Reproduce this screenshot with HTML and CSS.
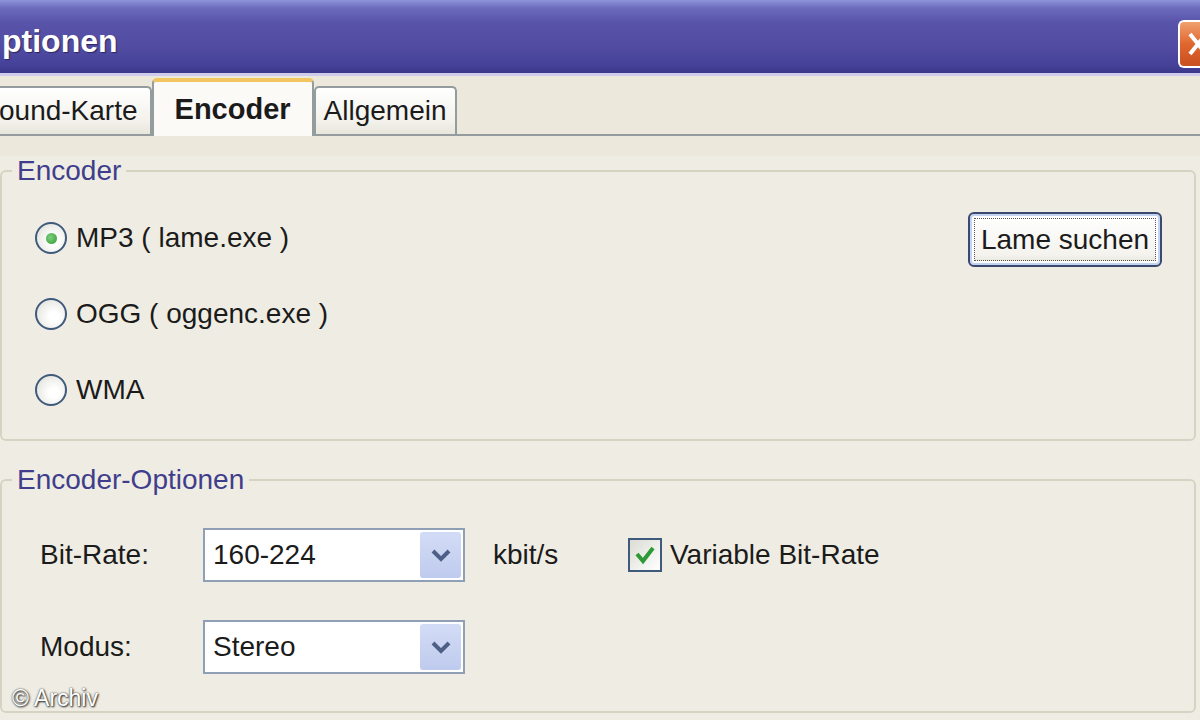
FILE: index.html
```html
<!DOCTYPE html>
<html lang="de">
<head>
    <meta charset="UTF-8">
    <title>Optionen</title>
    <link rel="stylesheet" href="styles.css">
</head>
<body>
    <div class="window">
        <div class="titlebar">
            <span class="title">ptionen</span>
            <span class="close-btn">
                <svg width="20" height="44" viewBox="0 0 20 44">
                    <path d="M10 12 L26 32 M26 12 L10 32" stroke="#fff" stroke-width="4" fill="none"/>
                </svg>
            </span>
        </div>

        <div class="tabs">
            <div class="tab tab-first">ound-Karte</div>
            <div class="tab active">Encoder</div>
            <div class="tab">Allgemein</div>
        </div>

        <div class="panel">
            <fieldset class="group group-encoder">
                <legend>Encoder</legend>
                <div class="encoder-body">
                    <div class="radios">
                        <label class="radio checked"><span class="radio-dot"></span>MP3 ( lame.exe )</label>
                        <label class="radio"><span class="radio-dot"></span>OGG ( oggenc.exe )</label>
                        <label class="radio"><span class="radio-dot"></span>WMA</label>
                    </div>
                    <button type="button" class="xp-btn">Lame suchen</button>
                </div>
            </fieldset>

            <fieldset class="group group-options">
                <legend>Encoder-Optionen</legend>
                <div class="options-body">
                    <div class="opt-row">
                        <span class="opt-label">Bit-Rate:</span>
                        <div class="combo">
                            <span class="combo-value">160-224</span>
                            <span class="combo-arrow">
                                <svg width="20" height="14" viewBox="0 0 20 14">
                                    <path d="M2 3 L10 11 L18 3" stroke="#4d5f86" stroke-width="4" fill="none"/>
                                </svg>
                            </span>
                        </div>
                        <span class="unit">kbit/s</span>
                        <label class="check">
                            <span class="check-box">
                                <svg width="24" height="22" viewBox="0 0 24 22">
                                    <path d="M4 10 L10 17 L20 4" stroke="#2f9a35" stroke-width="4" fill="none"/>
                                </svg>
                            </span>
                            Variable Bit-Rate
                        </label>
                    </div>
                    <div class="opt-row">
                        <span class="opt-label">Modus:</span>
                        <div class="combo">
                            <span class="combo-value">Stereo</span>
                            <span class="combo-arrow">
                                <svg width="20" height="14" viewBox="0 0 20 14">
                                    <path d="M2 3 L10 11 L18 3" stroke="#4d5f86" stroke-width="4" fill="none"/>
                                </svg>
                            </span>
                        </div>
                    </div>
                </div>
            </fieldset>
        </div>

        <div class="watermark">© Archiv</div>
    </div>
</body>
</html>
```

FILE: styles.css
```css
body {
    margin: 0;
    font-family: "Liberation Sans", Arial, sans-serif;
    background-color: #ece9dc;
    color: #1b1b1b;
    overflow: hidden;
}
.window {
    position: relative;
    width: 1200px;
    height: 720px;
    overflow: hidden;
}
.titlebar {
    height: 73px;
    display: flex;
    align-items: center;
    justify-content: space-between;
    background: linear-gradient(to bottom, #8d94d8 0, #6c6bbd 8px, #5854aa 22px, #514ca2 48px, #46429a 64px, #3b3789 73px);
    border-bottom: 3px solid #cfcbec;
}
.title {
    padding-top: 10px;
    padding-left: 2px;
    color: #fff;
    font-size: 32px;
    font-weight: bold;
    text-shadow: 1px 1px 1px #2a2660;
}
.close-btn {
    display: flex;
    width: 20px;
    height: 44px;
    margin-top: 14px;
    background: linear-gradient(to bottom, #f0a070, #e0672f 50%, #c9501f);
    border: 2px solid #fff;
    border-right: none;
    border-radius: 6px 0 0 6px;
    overflow: hidden;
}
.tabs {
    display: flex;
    align-items: flex-end;
    padding-top: 2px;
    height: 56px;
    border-bottom: 2px solid #959c9d;
}
.tab {
    height: 46px;
    line-height: 46px;
    padding: 0 8px;
    font-size: 28px;
    border: 2px solid #959c9d;
    border-bottom: none;
    border-radius: 5px 5px 0 0;
    background: linear-gradient(to bottom, #ffffff, #f3f2ec 70%, #e8e6dc);
}
.tab-first {
    margin-left: -13px;
    padding-left: 10px;
    padding-right: 12px;
}
.tab.active {
    height: 54px;
    line-height: 54px;
    margin-bottom: -2px;
    padding: 0 21px;
    font-size: 29px;
    font-weight: bold;
    border-top: 4px solid #f3c560;
    background: #fbfaf6;
}
.panel {
    padding-right: 4px;
    background-color: #efede3;
    height: 600px;
}
.group {
    margin: 0;
    padding: 0;
    min-width: 0;
    border: 2px solid #d6d3c3;
    border-radius: 6px;
}
.group legend {
    margin-left: 10px;
    padding: 0 5px;
    font-size: 28px;
    line-height: 30px;
    color: #403e8c;
}
.group-encoder {
    margin-top: 20px;
}
.group-options {
    margin-top: 24px;
}
.encoder-body {
    display: flex;
    justify-content: space-between;
    align-items: flex-start;
    padding: 32px 32px 29px 33px;
}
.radios {
    display: flex;
    flex-direction: column;
    gap: 36px;
}
.radio {
    display: flex;
    align-items: center;
    gap: 9px;
    height: 40px;
    font-size: 28px;
}
.radio-dot {
    width: 28px;
    height: 28px;
    border: 2px solid #3f5a7c;
    border-radius: 50%;
    background: radial-gradient(circle at 60% 60%, #ffffff 20%, #dcdcd4);
    display: flex;
    align-items: center;
    justify-content: center;
}
.radio.checked .radio-dot::after {
    content: "";
    width: 11px;
    height: 11px;
    border-radius: 50%;
    background: radial-gradient(circle at 40% 40%, #7fd07f, #2e9a2e);
}
.xp-btn {
    margin-top: -6px;
    width: 194px;
    height: 55px;
    font-family: "Liberation Sans", Arial, sans-serif;
    font-size: 28px;
    color: #1b1b1b;
    border: 2px solid #3a4a6e;
    border-radius: 6px;
    background: linear-gradient(to bottom, #ffffff, #f4f3ee 80%, #e3e0d2);
    box-shadow: inset 0 0 0 2px #c5d3f3, inset 0 0 0 4px #ffffff;
    outline: 1px dotted #555;
    outline-offset: -7px;
}
.options-body {
    display: flex;
    flex-direction: column;
    gap: 38px;
    padding: 33px 0 37px 38px;
}
.opt-row {
    display: flex;
    align-items: center;
    font-size: 28px;
}
.opt-label {
    width: 163px;
}
.combo {
    display: flex;
    align-items: center;
    justify-content: space-between;
    box-sizing: border-box;
    width: 262px;
    height: 54px;
    background: #fff;
    border: 2px solid #8f9fb5;
}
.combo-value {
    padding-left: 8px;
}
.combo-arrow {
    display: flex;
    align-items: center;
    justify-content: center;
    width: 41px;
    height: 46px;
    margin-right: 2px;
    border-radius: 3px;
    background: linear-gradient(to bottom, #d3dcf6, #bfcbee);
}
.unit {
    width: 135px;
    margin-left: 28px;
}
.check {
    display: flex;
    align-items: center;
    gap: 8px;
}
.check-box {
    display: flex;
    align-items: center;
    justify-content: center;
    width: 30px;
    height: 30px;
    border: 2px solid #3f5a7c;
    background: linear-gradient(135deg, #dcdcd4, #ffffff);
}
.watermark {
    position: absolute;
    left: 12px;
    bottom: 8px;
    font-size: 23px;
    color: #fff;
    text-shadow: 0 0 2px #333, 1px 1px 2px #222;
}
```
